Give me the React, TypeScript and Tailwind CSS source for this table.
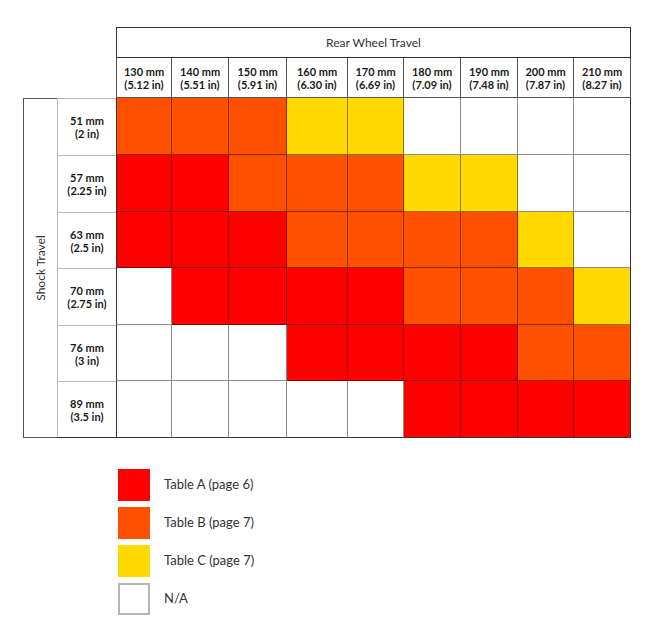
import React from 'react';

type Level = 'A' | 'B' | 'C' | 'N';

const fill: Record<Level, string> = {
  A: 'bg-[#ff0000]',
  B: 'bg-[#ff5000]',
  C: 'bg-[#ffd900]',
  N: 'bg-white',
};

const rearTravel = [
  ['130 mm', '(5.12 in)'],
  ['140 mm', '(5.51 in)'],
  ['150 mm', '(5.91 in)'],
  ['160 mm', '(6.30 in)'],
  ['170 mm', '(6.69 in)'],
  ['180 mm', '(7.09 in)'],
  ['190 mm', '(7.48 in)'],
  ['200 mm', '(7.87 in)'],
  ['210 mm', '(8.27 in)'],
];

const shockRows: { mm: string; inch: string; cells: Level[] }[] = [
  { mm: '51 mm', inch: '(2 in)', cells: ['B', 'B', 'B', 'C', 'C', 'N', 'N', 'N', 'N'] },
  { mm: '57 mm', inch: '(2.25 in)', cells: ['A', 'A', 'B', 'B', 'B', 'C', 'C', 'N', 'N'] },
  { mm: '63 mm', inch: '(2.5 in)', cells: ['A', 'A', 'A', 'B', 'B', 'B', 'B', 'C', 'N'] },
  { mm: '70 mm', inch: '(2.75 in)', cells: ['N', 'A', 'A', 'A', 'A', 'B', 'B', 'B', 'C'] },
  { mm: '76 mm', inch: '(3 in)', cells: ['N', 'N', 'N', 'A', 'A', 'A', 'A', 'B', 'B'] },
  { mm: '89 mm', inch: '(3.5 in)', cells: ['N', 'N', 'N', 'N', 'N', 'A', 'A', 'A', 'A'] },
];

const legend: { level: Level; label: string }[] = [
  { level: 'A', label: 'Table A (page 6)' },
  { level: 'B', label: 'Table B (page 7)' },
  { level: 'C', label: 'Table C (page 7)' },
  { level: 'N', label: 'N/A' },
];

export default function App() {
  return (
    <div className="w-[654px] h-[629px] bg-white text-[#1a1a1a] font-['Lato','Liberation_Sans',sans-serif] pl-[23px] pt-[27px]">
      {/* chart grid: shock label, row label, then the nine travel columns */}
      <div className="grid grid-cols-[34px_59px_56px_57px_58px_61px_56px_57px_57px_56px_57px] grid-rows-[31px_40px_57px_57px_56px_57px_56px_57px] w-[608px]">
        <div className="col-start-3 col-span-9 row-start-1 flex items-center justify-center border border-[#333] text-[12px] text-[#333]">
          Rear Wheel Travel
        </div>

        {rearTravel.map(([mm, inch], i) => (
          <div
            key={mm}
            className={`row-start-2 flex flex-col items-center justify-center border-b border-r border-[#555] text-[11px] font-bold leading-[13px] ${i === 0 ? 'border-l' : ''}`}
            style={{ gridColumnStart: i + 3 }}
          >
            <span>{mm}</span>
            <span>{inch}</span>
          </div>
        ))}

        <div className="col-start-1 row-start-3 row-span-6 flex items-center justify-center border-l border-t border-b border-[#555]">
          <span className="-rotate-90 whitespace-nowrap text-[12px] text-[#333]">Shock Travel</span>
        </div>

        {shockRows.map((row, r) => (
          <React.Fragment key={row.mm}>
            <div
              className="col-start-2 flex flex-col items-center justify-center border-l border-t border-[#bbb] text-[11px] font-bold leading-[13px]"
              style={{ gridRowStart: r + 3 }}
            >
              <span>{row.mm}</span>
              <span>{row.inch}</span>
            </div>
            {row.cells.map((lvl, c) => (
              <div
                key={c}
                className={`${fill[lvl]} border-r border-b border-black/45 ${c === 0 ? 'border-l border-l-[#333]' : ''} ${c === 8 ? 'border-r-[#333]' : ''} ${r === 5 ? 'border-b-[#333]' : ''}`}
                style={{ gridRowStart: r + 3, gridColumnStart: c + 3 }}
              />
            ))}
          </React.Fragment>
        ))}
        <div className="col-start-2 row-start-8 border-b border-[#333]" />
      </div>

      {/* legend */}
      <div className="flex flex-col gap-[6px] ml-[95px] mt-[31px]">
        {legend.map((item) => (
          <div key={item.label} className="flex items-center gap-[14px]">
            <div
              className={`w-[32px] h-[32px] ${fill[item.level]} ${item.level === 'N' ? 'border-2 border-[#b5b5b5]' : ''}`}
            />
            <span className="text-[13px] text-[#333]">{item.label}</span>
          </div>
        ))}
      </div>
    </div>
  );
}
